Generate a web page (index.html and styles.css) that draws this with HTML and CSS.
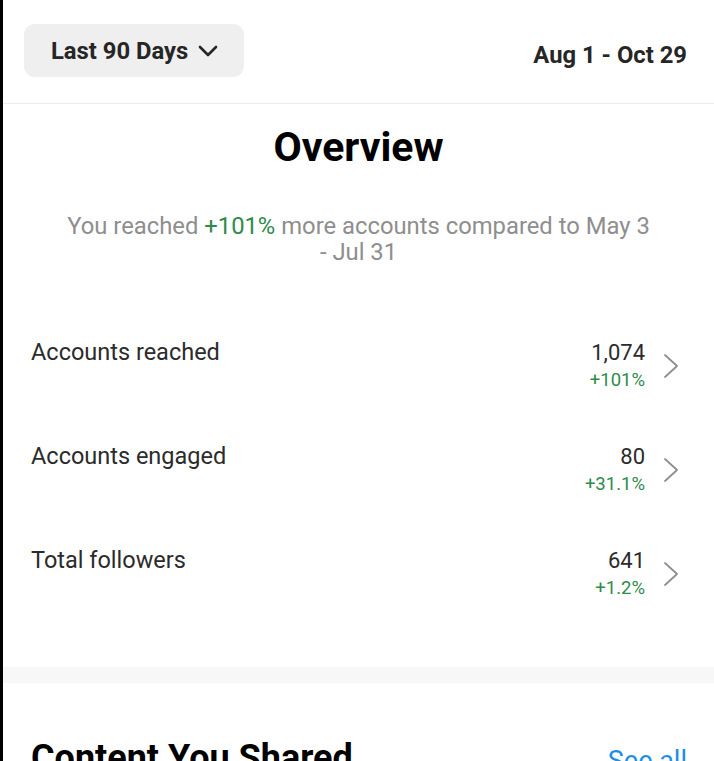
FILE: index.html
```html
<!DOCTYPE html>
<html>
<head>
<meta charset="utf-8">
<link rel="stylesheet" href="styles.css">
</head>
<body>
<div class="screen">
  <header class="topbar">
    <button class="range">
      <span>Last 90 Days</span>
      <svg class="chev-down" width="20" height="12" viewBox="0 0 20 12"><path d="M2 2 L10 10 L18 2" fill="none" stroke="#262626" stroke-width="2.6" stroke-linecap="round" stroke-linejoin="round"/></svg>
    </button>
    <div class="dates">Aug 1 - Oct 29</div>
  </header>

  <section class="overview">
    <h1 class="title">Overview</h1>
    <p class="summary">You reached <span class="up">+101%</span> more accounts compared to May 3 - Jul 31</p>

    <div class="rows">
      <div class="row">
        <div class="label">Accounts reached</div>
        <div class="vals"><div class="num">1,074</div><div class="pct">+101%</div></div>
        <svg class="chev" width="18" height="26" viewBox="0 0 18 26"><path d="M3 2 L15 13 L3 24" fill="none" stroke="#8e8e8e" stroke-width="1.8" stroke-linecap="round" stroke-linejoin="round"/></svg>
      </div>
      <div class="row">
        <div class="label">Accounts engaged</div>
        <div class="vals"><div class="num">80</div><div class="pct">+31.1%</div></div>
        <svg class="chev" width="18" height="26" viewBox="0 0 18 26"><path d="M3 2 L15 13 L3 24" fill="none" stroke="#8e8e8e" stroke-width="1.8" stroke-linecap="round" stroke-linejoin="round"/></svg>
      </div>
      <div class="row">
        <div class="label">Total followers</div>
        <div class="vals"><div class="num">641</div><div class="pct">+1.2%</div></div>
        <svg class="chev" width="18" height="26" viewBox="0 0 18 26"><path d="M3 2 L15 13 L3 24" fill="none" stroke="#8e8e8e" stroke-width="1.8" stroke-linecap="round" stroke-linejoin="round"/></svg>
      </div>
    </div>
  </section>

  <div class="band"></div>

  <section class="content">
    <h2 class="subtitle">Content You Shared</h2>
    <a class="seeall">See all</a>
  </section>
</div>
</body>
</html>
```

FILE: styles.css
```css
html, body {
  margin: 0;
  padding: 0;
  background: #ffffff;
}
body {
  font-family: Roboto, "Noto Sans", sans-serif;
  color: #262626;
}
.screen {
  border-left: 3px solid #000;
  box-sizing: border-box;
  overflow: hidden;
  height: 761px;
}
.topbar {
  height: 104px;
  box-sizing: border-box;
  border-bottom: 1px solid #ececec;
  display: flex;
  align-items: flex-start;
  justify-content: space-between;
  padding: 24px 27px 0 21px;
}
.range {
  width: 220px;
  height: 53px;
  border: none;
  border-radius: 11px;
  background: #efefef;
  display: flex;
  align-items: center;
  gap: 10px;
  padding: 0 0 0 27px;
  font-family: inherit;
  font-size: 23.8px;
  font-weight: 700;
  color: #262626;
}
.chev-down { display: block; margin-top: 1px; }
.dates {
  font-size: 23.8px;
  font-weight: 700;
  line-height: 28px;
  margin-top: 17px;
  color: #262626;
}
.title {
  margin: 19px 0 0;
  text-align: center;
  font-size: 41px;
  font-weight: 700;
  color: #000;
  line-height: 48px;
}
.summary {
  margin: 42px auto 0;
  max-width: 590px;
  text-align: center;
  font-size: 23.8px;
  line-height: 26px;
  color: #8e8e8e;
}
.up { color: #2e8b4a; }
.rows {
  margin-top: 73px;
  display: flex;
  flex-direction: column;
  padding: 0 34px 0 28px;
}
.row {
  display: flex;
  align-items: flex-start;
  height: 104px;
}
.label {
  flex: 1;
  font-size: 23.5px;
  line-height: 28px;
  color: #2b2b2b;
}
.vals {
  text-align: right;
}
.num {
  font-size: 22px;
  line-height: 30px;
  color: #2b2b2b;
}
.pct {
  font-size: 18.5px;
  line-height: 24px;
  color: #2e8b4a;
}
.chev {
  margin: 15px 0 0 17px;
  display: block;
}
.band {
  margin-top: 17px;
  height: 16px;
  background: #f7f7f7;
}
.content {
  display: flex;
  justify-content: space-between;
  align-items: baseline;
  padding: 54px 27px 0 28px;
}
.subtitle {
  margin: 0;
  font-size: 36px;
  line-height: 42px;
  font-weight: 700;
  color: #000;
}
.seeall {
  font-size: 27px;
  color: #1d8ee6;
}
```
